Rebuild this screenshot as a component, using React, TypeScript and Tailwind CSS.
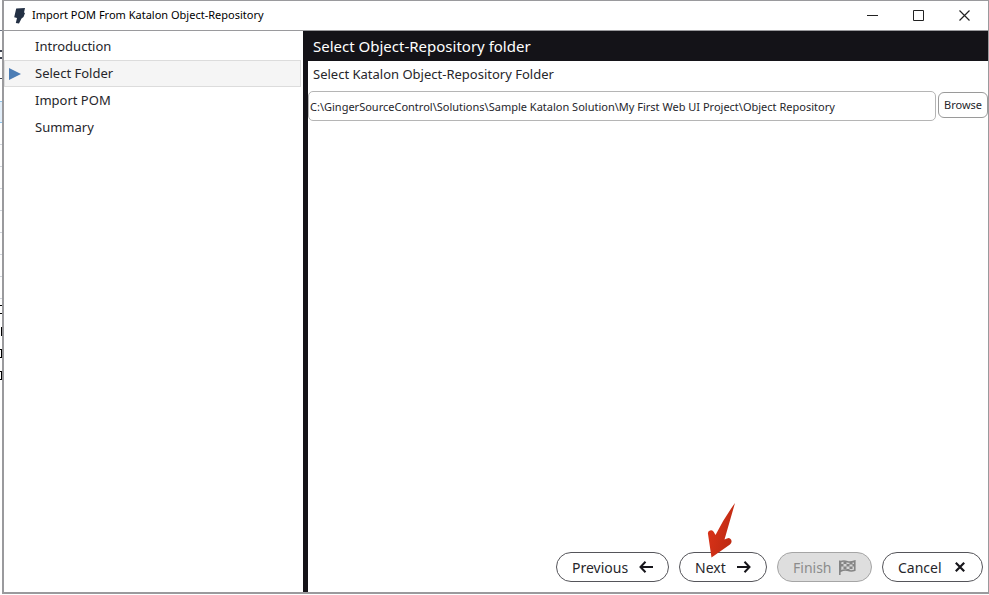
import { useState } from "react";

const steps = ["Introduction", "Select Folder", "Import POM", "Summary"];

function BackgroundStrip() {
  return (
    <div aria-hidden="true" className="flex w-[2px] shrink-0 flex-col overflow-hidden bg-white">
      <div className="h-[30px]" />
      <div className="h-[20px] border-t border-gray-500" />
      <div className="h-[9px] border-y-2 border-[#3d4350]" />
      <div className="h-[20px] border-b border-[#3d4350]" />
      <div className="h-[22px]" />
      <div className="h-[22px] border-y border-[#8fc3ea] bg-[#e3effa]" />
      {[0, 1, 2, 3, 4, 5, 6, 7].map((n) => (
        <div key={n} className="h-[22px] shrink-0 border-b border-gray-300" />
      ))}
      <div className="flex flex-col gap-[13px] pt-[6px]">
        <div className="h-[9px] border-y border-black" />
        <div className="ml-px h-[9px] bg-black" />
        <div className="h-[9px] border-y border-r border-black" />
        <div className="h-[9px] border-y border-r border-black" />
      </div>
    </div>
  );
}

function TitleBar() {
  return (
    <header className="flex h-[30px] shrink-0 items-center border-b border-[#9a9a9d]">
      <svg className="ml-[10px] h-[16px] w-[12px]" viewBox="0 0 12 16" fill="#233044">
        <path d="M2.200.5 11 0 10 4.500 11 5 9.500 9 7.500 10.500 5 15.500 1.800 15 3 10 .2 9.200Z" />
      </svg>
      <h1 className="ml-[6px] flex-1 text-[11px] text-black">Import POM From Katalon Object-Repository</h1>
      <div className="flex h-full pr-px">
        <button aria-label="Minimize" className="flex h-full w-[46px] items-center justify-center">
          <svg width="11" height="11" viewBox="0 0 11 11" stroke="#222" fill="none">
            <path d="M0 5.5h11" />
          </svg>
        </button>
        <button aria-label="Maximize" className="flex h-full w-[46px] items-center justify-center">
          <svg width="11" height="11" viewBox="0 0 11 11" stroke="#222" fill="none">
            <path d="M.5.5h10v10H.5z" />
          </svg>
        </button>
        <button aria-label="Close" className="flex h-full w-[46px] items-center justify-center">
          <svg width="11" height="11" viewBox="0 0 11 11" stroke="#222" fill="none" strokeWidth="1.2">
            <path d="M.5.5l10 10M10.5.5l-10 10" />
          </svg>
        </button>
      </div>
    </header>
  );
}

function ArrowLeft() {
  return (
    <svg width="14" height="12" viewBox="0 0 14 12" fill="none" stroke="#17161b" strokeWidth="2">
      <path d="M6.5.8 1.5 6l5 5.2M1.5 6H14" />
    </svg>
  );
}

function ArrowRight() {
  return (
    <svg width="14" height="12" viewBox="0 0 14 12" fill="none" stroke="#17161b" strokeWidth="2">
      <path d="M7.5.8 12.5 6l-5 5.2M12.5 6H0" />
    </svg>
  );
}

function Flag() {
  return (
    <svg width="17" height="15" viewBox="0 0 17 15">
      <path d="M.8.5V15" stroke="#858585" strokeWidth="1.6" />
      <path
        d="M1.5 1.7C4 .6 6 .8 8.500 1.700S13 2 15.800 1V10.300C13 11.400 11 11.200 8.500 10.300S4 10 1.500 11.200Z"
        fill="#d5d5d5"
        stroke="#858585"
        strokeWidth="1.6"
      />
      <path
        d="M4.500 1.500h3v2.500h-3zM10.500 2h3v2.500h-3zM1.500 4h3v2.500h-3zM7.500 4h3v2.500h-3zM13.500 4h2v2.500h-2zM4.500 6.500h3V9h-3zM10.500 6.500h3V9h-3zM7.500 9h3v1.500h-3z"
        fill="#858585"
      />
    </svg>
  );
}

function Cross() {
  return (
    <svg width="10" height="10" viewBox="0 0 10 10" fill="none" stroke="#17161b" strokeWidth="2.200">
      <path d="M.8.8l8.400 8.400M9.200.8.8 9.200" />
    </svg>
  );
}

function Pointer() {
  return (
    <svg
      aria-hidden="true"
      className="pointer-events-none absolute bottom-[24px] left-[28px] h-[56px] w-[30px]"
      viewBox="0 0 30 56"
    >
      <defs>
        <linearGradient id="red" x1="0" y1="0" x2="1" y2="0.500">
          <stop offset="0" stopColor="#e0341a" />
          <stop offset="1" stopColor="#bd2a12" />
        </linearGradient>
      </defs>
      <path
        d="M28 1Q17 16 8.500 33L6.800 30Q5.500 27.500 3 28.500T1 32L4.500 55.500 23 42.500Q25.500 40 24 37.500T20 36.500L17.500 37.500Q22 22 28 1Z"
        fill="url(#red)"
      />
    </svg>
  );
}

const pill = "flex h-[30px] items-center justify-between rounded-full border px-[15px] text-[14px]";

export default function App() {
  const [path, setPath] = useState(
    "C:\\GingerSourceControl\\Solutions\\Sample Katalon Solution\\My First Web UI Project\\Object Repository",
  );
  const [active, setActive] = useState(1);

  return (
    <div className="flex h-screen bg-white pb-px font-['Noto_Sans','Open_Sans',sans-serif] text-[#26262b]">
      <BackgroundStrip />
      <div className="flex min-w-0 flex-1 flex-col border-2 border-t border-r border-[#9a9a9d]">
        <TitleBar />
        <div className="flex min-h-0 flex-1">
          <nav className="w-[299px] shrink-0 pt-[2px] pr-[2px]">
            {steps.map((step, i) => (
              <button
                key={step}
                onClick={() => setActive(i)}
                aria-current={i === active ? "step" : undefined}
                className={
                  i === active
                    ? "flex h-[27px] w-full items-center border border-[#dcdcdc] bg-[#f5f5f5] text-[13px]"
                    : "flex h-[27px] w-full items-center border border-transparent text-[13px]"
                }
              >
                <span className="flex w-[30px] shrink-0 pl-[4px]">
                  {i === active && (
                    <svg width="12" height="12" viewBox="0 0 12 12" fill="#4c7db5">
                      <path d="M0 0 12 6 0 12z" />
                    </svg>
                  )}
                </span>
                {step}
              </button>
            ))}
          </nav>
          <main className="flex min-w-0 flex-1 flex-col border-l-[5px] border-[#141318]">
            <h2 className="flex h-[30px] shrink-0 items-center bg-[#141318] pl-[5px] text-[15px] text-white">
              Select Object-Repository folder
            </h2>
            <label htmlFor="folder" className="flex h-[27px] shrink-0 items-center pl-[5px] text-[13px]">
              Select Katalon Object-Repository Folder
            </label>
            <div className="mt-[3px] flex gap-[2px]">
              <input
                id="folder"
                value={path}
                onChange={(e) => setPath(e.target.value)}
                className="h-[30px] min-w-0 flex-1 rounded-[5px] border border-[#b5b5b5] px-px text-[11px] outline-none"
              />
              <button className="mt-px h-[26px] w-[50px] rounded-[6px] border border-[#9a9a9a] text-[11px]">
                Browse
              </button>
            </div>
            <footer className="mt-auto flex justify-end gap-[10px] pr-[5px] pb-[10px]">
              <button className={`${pill} w-[113px] border-[#55555a]`}>
                Previous
                <ArrowLeft />
              </button>
              <div className="relative">
                <button className={`${pill} w-[88px] border-[#55555a]`}>
                  Next
                  <ArrowRight />
                </button>
                <Pointer />
              </div>
              <button disabled className={`${pill} w-[95px] border-[#a5a5a5] bg-[#dedede] text-[#8c8c8c]`}>
                Finish
                <Flag />
              </button>
              <button className={`${pill} w-[101px] border-[#55555a]`}>
                Cancel
                <span className="pr-[2px]">
                  <Cross />
                </span>
              </button>
            </footer>
          </main>
        </div>
      </div>
    </div>
  );
}
